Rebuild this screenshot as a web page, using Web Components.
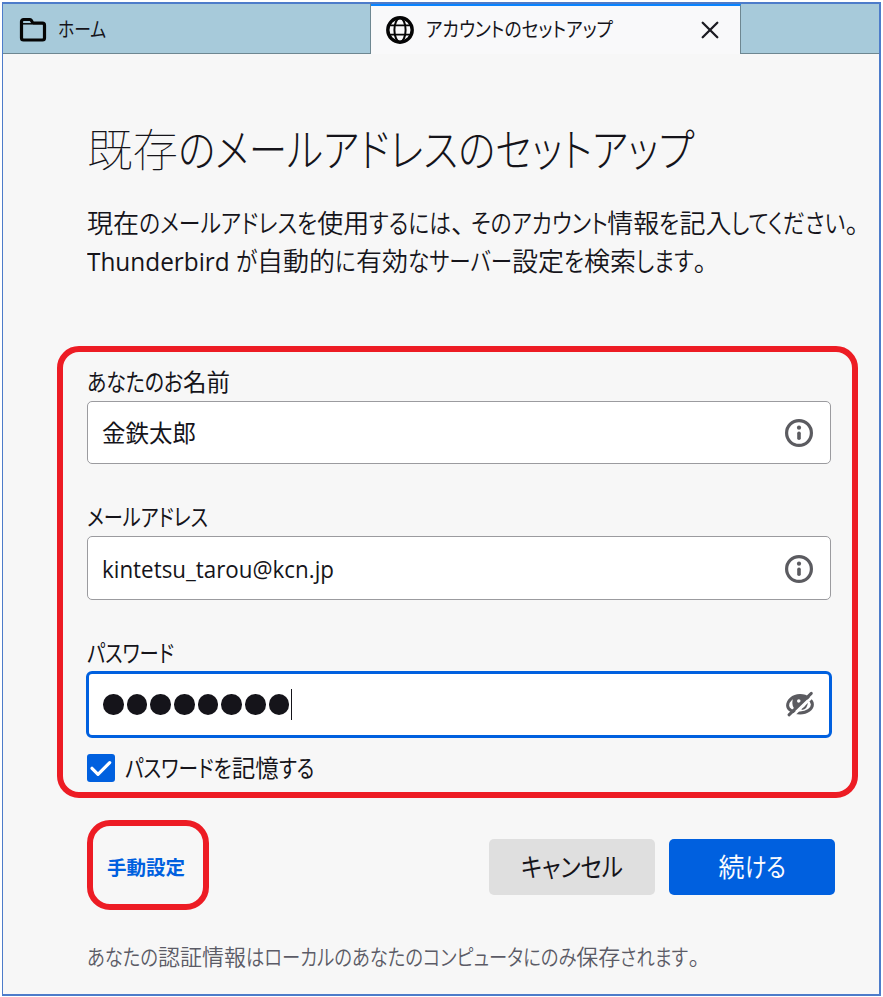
<!DOCTYPE html>
<html lang="ja">
<head>
<meta charset="utf-8">
<title>アカウントのセットアップ</title>
<style>
html,body{margin:0;height:997px;background:#fff;overflow:hidden}
body{font-family:"Open Sans","Noto Sans CJK JP",sans-serif;color:#15141a}
</style>
</head>
<body>
<setup-window></setup-window>
<script>
// Sets a line of Japanese at a given width: kanji keep their square body, kana are condensed.
class FitLine extends HTMLElement {
  connectedCallback() {
    const root = this.attachShadow({mode:'open'});
    root.innerHTML = `<style>
      :host{display:block;white-space:pre;line-height:1.4;font-feature-settings:"palt"}
      span{display:inline-block;transform-origin:0 50%;white-space:pre}
      .kana{font-weight:var(--kana-weight,inherit)}
      .kanji{font-feature-settings:normal}
      .latin{font-weight:400}
      .mark{width:.75em}
    </style>`;
    const text = this.getAttribute('text');
    const total = +this.getAttribute('width');
    const latin = +this.getAttribute('latin') || 0;
    let fixed = 0, free = 0;
    const runs = text.match(/[\u4e00-\u9fff]+|[ -~]+|[、。]|[^\u4e00-\u9fff -~、。]+/g).map(t => {
      const s = document.createElement('span');
      s.textContent = t;
      s.className = /[\u4e00-\u9fff]/.test(t) ? 'kanji' : /[ -~]/.test(t) ? 'latin' : /[、。]/.test(t) ? 'mark' : 'kana';
      root.append(s);
      const kind = s.className;
      const w = s.getBoundingClientRect().width;
      if (kind === 'kanji' || kind === 'mark') fixed += w;
      else if (kind === 'latin' && latin) fixed += latin;
      else free += w;
      return {s, w, kind};
    });
    const k = free ? (total - fixed) / free : 1;
    for (const r of runs) {
      if (r.kind === 'kanji' || r.kind === 'mark') continue;
      const f = r.kind === 'latin' && latin ? latin / r.w : k;
      r.s.style.transform = `scaleX(${f})`;
      r.s.style.marginRight = (r.w * (f - 1)) + 'px';
    }
  }
}
customElements.define('fit-line', FitLine);

const define = (name, html) => customElements.define(name, class extends HTMLElement {
  connectedCallback() {
    if (this.shadowRoot) return;
    const t = document.createElement('template');
    t.innerHTML = html;
    this.attachShadow({mode:'open'}).append(t.content.cloneNode(true));
  }
});

define('folder-icon', `<style>:host{display:block;width:28px;height:26px}svg{display:block}</style>
<svg width="28" height="26" viewBox="0 0 28 26" fill="none" stroke="#050505" stroke-width="3.200" stroke-linejoin="round"><path d="M2.500 7V4.500a2 2 0 0 1 2-2h6.200a2 2 0 0 1 1.500.7L14 6.200H23.500a2 2 0 0 1 2 2V21a2 2 0 0 1-2 2h-19a2 2 0 0 1-2-2z"/><path d="M3 6.800h10" stroke-width="1.500"/></svg>`);
define('globe-icon', `<style>:host{display:block;width:28px;height:28px}svg{display:block}</style>
<svg width="28" height="28" viewBox="0 0 28 28" fill="none" stroke="#050505"><circle cx="14" cy="14" r="12.200" stroke-width="3.400"/><ellipse cx="14" cy="14" rx="5.600" ry="12" stroke-width="2"/><path d="M3 9.300h22M3 18.700h22" stroke-width="1.800"/></svg>`);
define('close-icon', `<style>:host{display:block;width:18px;height:18px}svg{display:block}</style>
<svg width="18" height="18" viewBox="0 0 18 18" fill="none" stroke="#1c1b22" stroke-width="2.300" stroke-linecap="round"><path d="M1.700 1.700l14.600 14.600M16.300 1.700L1.700 16.300"/></svg>`);
define('info-icon', `<style>:host{display:block;width:28px;height:28px}svg{display:block}</style>
<svg width="28" height="28" viewBox="0 0 28 28"><circle cx="14" cy="14" r="12.400" fill="none" stroke="#5b5b60" stroke-width="3.200"/><circle cx="14" cy="8.700" r="2.100" fill="#5b5b60"/><path d="M14 14.200v5" stroke="#5b5b60" stroke-width="3.600" stroke-linecap="round"/></svg>`);
define('eye-off-icon', `<style>:host{display:block;width:28px;height:28px}svg{display:block}</style>
<svg width="28" height="28" viewBox="0 0 28 28" fill="none" stroke="#5b5b60">
<path d="M1.600 15.500C1.600 11 6.500 5.600 14 5.600S26.400 11 26.400 14.500c0 4-5 8.500-12.400 8.500S1.600 19 1.600 15.500z" stroke-width="3"/>
<path d="M8 6.500h12.500l-11.500 13c-2.800-3-3.800-8-1-13z" fill="#5b5b60" stroke="none"/>
<circle cx="12.800" cy="11" r="1.800" fill="#fff" stroke="none"/>
<path d="M20.800 12.500c0 3.500-2.300 6-5.300 6.600" stroke-width="2"/>
<path d="M5.500 27L28 5.200" stroke="#fff" stroke-width="2.600"/>
<path d="M3 24.800L25.300 3.300" stroke-width="3" stroke-linecap="round"/></svg>`);

define('app-tab', `<style>
:host{display:flex;box-sizing:border-box;height:50px;align-items:center;background:#a7cada;border-bottom:1px solid #6e8791;border-right:1px solid #6e8791}
:host([active]){background:#f9f9fa;border-top:2px solid #0a84ff;border-bottom:0}
.label{flex:1}
</style><slot name="icon"></slot><div class="label"><slot></slot></div><slot name="end"></slot>`);

define('red-frame', `<style>:host{display:block;box-sizing:border-box;border:6px solid #ed1c24}</style><slot></slot>`);

define('form-field', `<style>
:host{display:block}
.label{display:flex;align-items:flex-end;height:var(--label-h);font-size:23.500px}
.box{box-sizing:border-box;height:63px;margin-top:var(--gap,3px);display:flex;align-items:center;border:1px solid #9b9b9f;border-radius:5px;background:#fff;padding:0 17px 0 14px;font-size:23.500px}
.value{flex:1;display:flex;align-items:center;padding-top:var(--drop,0)}
:host([tall]) .box{height:64px}
:host([focused]) .box{height:67px;margin-left:-1px;margin-right:-1px;border:3px solid #0060df;border-radius:6px;padding:0 15px 2px 14px}
</style><div class="label"><slot name="label"></slot></div><div class="box"><div class="value"><slot></slot></div><slot name="icon"></slot></div>`);

define('password-dots', `<style>
:host{display:flex;align-items:center;height:31px}
i{width:20.500px;height:20.500px;margin-right:3.200px;border-radius:50%;background:#15141a}
b{width:1px;height:31px;background:#15141a;margin-left:-2px}
</style>${'<i></i>'.repeat(8)}<b></b>`);

define('check-box', `<style>
:host{display:flex;align-items:center;gap:10px;height:28px;font-size:23.500px}
svg{display:block;flex:none}
</style><svg width="28" height="28" viewBox="0 0 28 28"><rect width="28" height="28" rx="3" fill="#0060df"/><path d="M5 14.300l6 6L22.700 8.600" fill="none" stroke="#fff" stroke-width="3.200" stroke-linecap="round" stroke-linejoin="round"/></svg><slot></slot>`);

define('push-button', `<style>
:host{display:flex;box-sizing:border-box;width:166px;height:56px;align-items:center;justify-content:center;border-radius:5px;background:#dfdfdf;color:#15141a;font-size:26px}
:host([primary]){background:#0060df;color:#fbfbfe}
</style><slot></slot>`);

define('setup-window', `<style>
:host{display:block;box-sizing:border-box;height:997px;padding:2px 2px 1px 2px}
.win{box-sizing:border-box;height:994px;border:2px solid #4d7cca;border-left-width:1px;background:#f7f7f7;display:flex;flex-direction:column}
.tabs{display:flex;flex:none;height:50px}
app-tab{font-size:20.500px}
.home{width:368px;padding:2px 0 0 16px}
.home .t{margin-left:11px}
.setup{width:370px;padding:0 21px 0 15px}
.setup .t{margin-left:12px;margin-top:-2px}
.rest{flex:1;border-right:0}
.body{display:flex;flex-direction:column;align-items:flex-start}
h1{margin:62px 0 0 84px;font-size:45.500px;font-weight:100;--kana-weight:300;height:68px;display:flex;align-items:center}
.intro{margin:20px 0 0 84px;font-size:26px;font-weight:350}
.intro fit-line{line-height:38px}
.main{margin:66px 0 0 54px;width:801px;height:452px;border-radius:22px;padding:0 21px 0 24px}
.f1{--label-h:47px;--gap:2px;--drop:2px}
.f2{--label-h:70px;--gap:2px;--drop:3px}
.f2 info-icon{margin-top:2px}
.f3{--label-h:70px;--gap:1px;--drop:2px}
check-box{margin-top:16px}
.actions{margin:22px 0 0 84px;width:748px;height:90px;display:flex;align-items:center}
.manual{width:122px;height:90px;border-radius:23px;display:flex;align-items:center;justify-content:center;font-size:19.500px;font-weight:700;color:#0060df;padding:6px 4px 0 0}
.buttons{margin-left:auto;display:flex;gap:14px;padding-top:4px}
.note{margin:31px 0 0 84px;font-size:22px;color:#5b5b66;font-weight:350}
</style>
<div class="win">
 <div class="tabs">
  <app-tab class="home"><folder-icon slot="icon"></folder-icon><fit-line class="t" text="ホーム" width="48"></fit-line></app-tab>
  <app-tab class="setup" active><globe-icon slot="icon"></globe-icon><fit-line class="t" text="アカウントのセットアップ" width="187"></fit-line><close-icon slot="end"></close-icon></app-tab>
  <app-tab class="rest"></app-tab>
 </div>
 <div class="body">
  <h1><fit-line text="既存のメールアドレスのセットアップ" width="607"></fit-line></h1>
  <div class="intro">
   <fit-line text="現在のメールアドレスを使用するには、そのアカウント情報を記入してください。" width="778"></fit-line>
   <fit-line text="Thunderbird が自動的に有効なサーバー設定を検索します。" width="626" latin="149"></fit-line>
  </div>
  <red-frame class="main">
   <form-field class="f1"><fit-line slot="label" text="あなたのお名前" width="143"></fit-line><fit-line text="金鉄太郎" width="94"></fit-line><info-icon slot="icon"></info-icon></form-field>
   <form-field class="f2" tall><fit-line slot="label" text="メールアドレス" width="121"></fit-line><fit-line text="kintetsu_tarou@kcn.jp" width="232"></fit-line><info-icon slot="icon"></info-icon></form-field>
   <form-field class="f3" focused><fit-line slot="label" text="パスワード" width="87"></fit-line><password-dots></password-dots><eye-off-icon slot="icon"></eye-off-icon></form-field>
   <check-box><fit-line text="パスワードを記憶する" width="189"></fit-line></check-box>
  </red-frame>
  <div class="actions">
   <red-frame class="manual"><fit-line text="手動設定" width="78"></fit-line></red-frame>
   <div class="buttons"><push-button><fit-line text="キャンセル" width="102"></fit-line></push-button><push-button primary><fit-line text="続ける" width="67"></fit-line></push-button></div>
  </div>
  <fit-line class="note" text="あなたの認証情報はローカルのあなたのコンピュータにのみ保存されます。" width="618"></fit-line>
 </div>
</div>`);
</script>
</body>
</html>
